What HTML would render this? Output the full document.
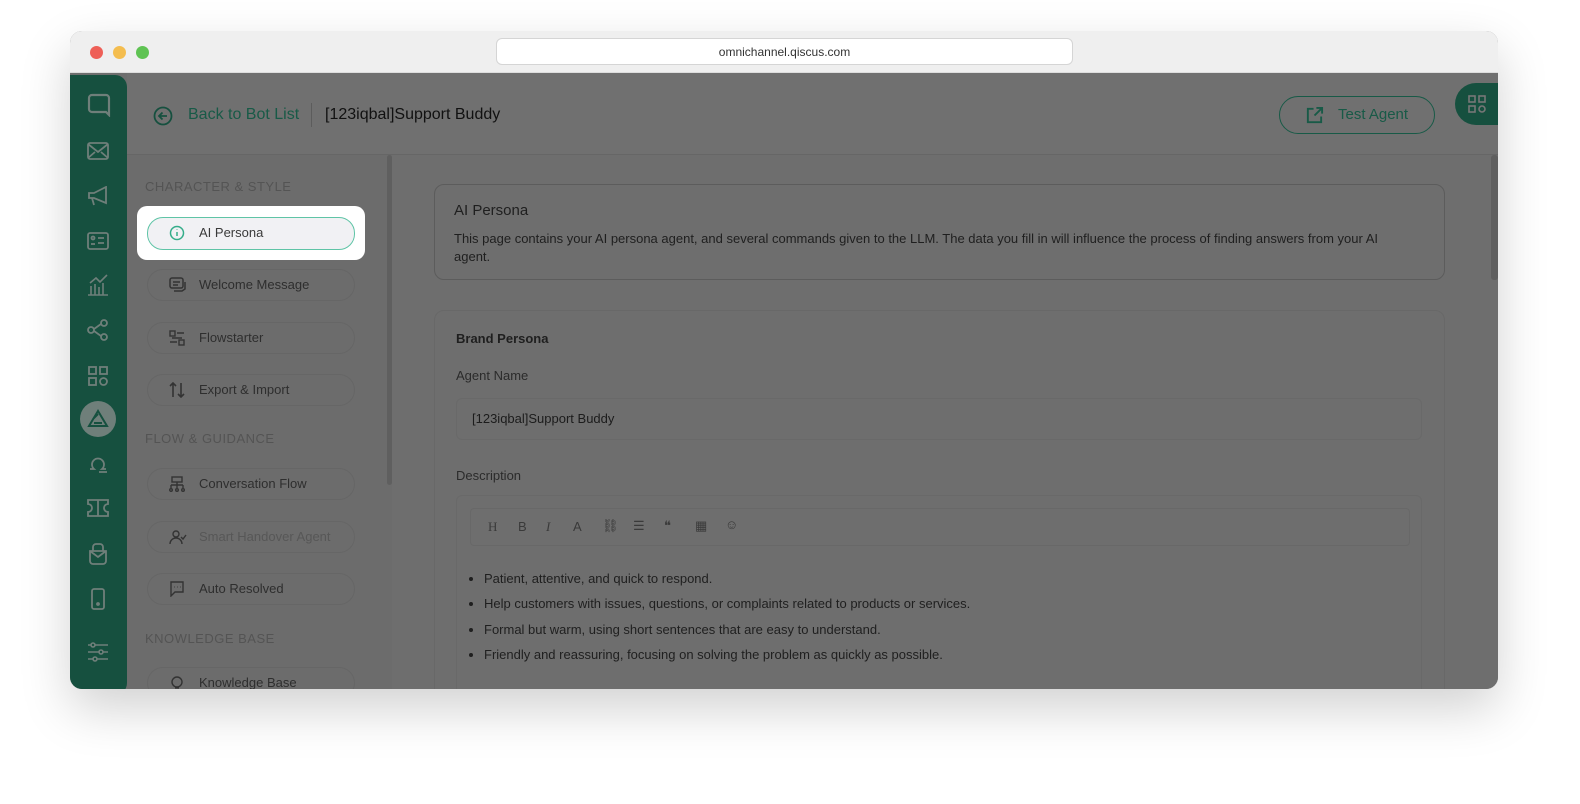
<!DOCTYPE html>
<html><head><meta charset="utf-8"><style>
*{box-sizing:border-box;margin:0;padding:0}
body{width:1580px;height:804px;background:#fff;font-family:"Liberation Sans",sans-serif;position:relative;overflow:hidden}
.win{position:absolute;left:70px;top:31px;width:1428px;height:658px;border-radius:12px;overflow:hidden;box-shadow:0 20px 50px rgba(0,0,0,.18);background:#6e6e6e}
.tb{position:absolute;left:0;top:0;width:100%;height:42px;background:#efefef;border-bottom:1px solid #ddd}
.dot{position:absolute;top:15px;width:13px;height:13px;border-radius:50%}
.url{position:absolute;left:426px;top:7px;width:577px;height:27px;background:#fff;border:1px solid #d5d5d5;border-radius:6px;font-size:12px;color:#333;text-align:center;line-height:26px}
.side{position:absolute;left:0;top:44px;width:57px;height:620px;background:#16503f;border-radius:0 12px 12px 0}
.side svg{position:absolute;left:17px}
.hdr{position:absolute;left:57px;top:42px;right:0;height:82px;background:#707070;border-bottom:1px solid #666}
.nav{position:absolute;left:57px;top:124px;width:265px;bottom:0;background:#6c6c6c}
.sec{position:absolute;left:18px;font-size:13px;color:#545454;letter-spacing:.5px}
.it{position:absolute;left:78px;width:208px;height:32px;border:1px solid #666;border-radius:16px;font-size:13px;color:#2e2e2e;line-height:30px;padding-left:51px}
.it svg{position:absolute;left:21px;top:7px}
.main{position:absolute;left:322px;top:124px;right:0;bottom:0;background:#6e6e6e}
.card{position:absolute;border:1px solid #5c5c5c;border-radius:10px}
.t{position:absolute;color:#1f1f1f}
</style></head><body>
<div class="win">
 <div class="tb">
  <div class="dot" style="left:20px;background:#ee5f57"></div>
  <div class="dot" style="left:43px;background:#f4bd4f"></div>
  <div class="dot" style="left:66px;background:#5fc353"></div>
  <div class="url">omnichannel.qiscus.com</div>
 </div>
 <div class="hdr">
  <svg style="position:absolute;left:26px;top:33px" width="20" height="20" viewBox="0 0 20 20" fill="none" stroke="#16503f" stroke-width="1.8"><circle cx="10" cy="10" r="8.5"/><path d="M14 10H6M9.5 6.5L6 10l3.5 3.5"/></svg>
  <div class="t" style="left:61px;top:33px;font-size:16px;color:#185a47">Back to Bot List</div>
  <div style="position:absolute;left:184px;top:30px;width:1px;height:24px;background:#5c5c5c"></div>
  <div class="t" style="left:198px;top:33px;font-size:16px;color:#111">[123iqbal]Support Buddy</div>
  <div style="position:absolute;left:1152px;top:23px;width:156px;height:38px;border:1px solid #185a47;border-radius:19px;color:#185a47;font-size:15px;line-height:36px;padding-left:58px">Test Agent
   <svg style="position:absolute;left:25px;top:9px" width="19" height="19" viewBox="0 0 20 20" fill="none" stroke="#185a47" stroke-width="2"><path d="M9 3H3v14h14v-6"/><path d="M10 10l8-8M12 2h6v6"/></svg></div>
  <div style="position:absolute;left:1328px;top:10px;width:50px;height:42px;background:#16503f;border-radius:21px 0 0 21px">
   <svg style="position:absolute;left:13px;top:12px" width="18" height="18" viewBox="0 0 18 18" fill="none" stroke="#777" stroke-width="1.6"><rect x="1" y="1" width="6" height="6"/><rect x="11" y="1" width="6" height="6"/><rect x="1" y="11" width="6" height="6"/><circle cx="14" cy="14" r="3"/></svg></div>
 </div>
 <div class="side">
  <svg style="top:18px" width="24" height="24" viewBox="0 0 24 24" fill="none" stroke="#6f7f7a" stroke-width="2.2"><path d="M5 2h14a3 3 0 013 3v17l-3-3H5a3 3 0 01-3-3V5a3 3 0 013-3z"/></svg>
  <svg style="top:67px" width="22" height="18" viewBox="0 0 22 18" fill="none" stroke="#6f7f7a" stroke-width="1.8"><rect x="1" y="1" width="20" height="16" rx="2"/><path d="M1 2l10 8 10-8M1 16l7-6M21 16l-7-6"/></svg>
  <svg style="top:111px" width="22" height="20" viewBox="0 0 22 20" fill="none" stroke="#6f7f7a" stroke-width="1.8"><path d="M2 7h5l12-6v16L7 12H2zM5 12l2 7"/></svg>
  <svg style="top:157px" width="22" height="18" viewBox="0 0 22 18" fill="none" stroke="#6f7f7a" stroke-width="1.8"><rect x="1" y="1" width="20" height="16" rx="2"/><path d="M11 6h6M11 11h6"/><circle cx="6" cy="6" r="1.5"/><path d="M4 12h4"/></svg>
  <svg style="top:199px" width="22" height="22" viewBox="0 0 22 22" fill="none" stroke="#6f7f7a" stroke-width="1.6"><path d="M1 21h20M4 21V12M8 21V10M12 21V13M16 21V9M3 9l6-5 4 4 7-7"/></svg>
  <svg style="top:244px" width="22" height="22" viewBox="0 0 22 22" fill="none" stroke="#6f7f7a" stroke-width="1.8"><circle cx="4" cy="11" r="3"/><circle cx="17" cy="4" r="3"/><circle cx="17" cy="18" r="3"/><path d="M7 10l7-5M7 12l7 5"/></svg>
  <svg style="top:290px" width="22" height="22" viewBox="0 0 22 22" fill="none" stroke="#6f7f7a" stroke-width="1.8"><rect x="2" y="2" width="7" height="7"/><rect x="13" y="2" width="7" height="7"/><rect x="2" y="13" width="7" height="7"/><circle cx="16.5" cy="16.5" r="3.5"/></svg>
  <div style="position:absolute;left:10px;top:326px;width:36px;height:36px;border-radius:50%;background:#6f7f7a"><svg style="position:absolute;left:7px;top:8px" width="22" height="20" viewBox="0 0 22 20" fill="none" stroke="#16503f" stroke-width="2"><path d="M11 2L2 17h18zM7 14h8M6 10l5-5"/></svg></div>
  <svg style="top:378px" width="22" height="22" viewBox="0 0 22 22" fill="none" stroke="#6f7f7a" stroke-width="1.8"><path d="M3 16h4a6 6 0 118 0h4M12 19h8"/></svg>
  <svg style="top:424px" width="22" height="18" viewBox="0 0 22 18" fill="none" stroke="#6f7f7a" stroke-width="1.8"><path d="M1 1h20v4a4 4 0 000 8v4H1v-4a4 4 0 000-8zM11 1v16"/></svg>
  <svg style="top:468px" width="22" height="22" viewBox="0 0 22 22" fill="none" stroke="#6f7f7a" stroke-width="1.8"><path d="M3 8h16v10a3 3 0 01-3 3H6a3 3 0 01-3-3zM3 8l8 6 8-6M6 8V4a3 3 0 013-3h4a3 3 0 013 3v4"/></svg>
  <svg style="top:513px" width="22" height="22" viewBox="0 0 22 22" fill="none" stroke="#6f7f7a" stroke-width="1.8"><rect x="5" y="1" width="12" height="20" rx="2"/><circle cx="11" cy="16" r="1"/></svg>
  <svg style="top:566px" width="22" height="22" viewBox="0 0 22 22" fill="none" stroke="#6f7f7a" stroke-width="1.6"><path d="M1 4h20M1 11h20M1 18h20"/><circle cx="6" cy="4" r="2" fill="#16503f"/><circle cx="14" cy="11" r="2" fill="#16503f"/><circle cx="8" cy="18" r="2" fill="#16503f"/></svg>
 </div>
 <div class="nav">
  <div style="position:absolute;right:0;top:0;width:5px;height:330px;background:#5f5f5f;border-radius:3px"></div>
  <div class="sec" style="top:24px">CHARACTER &amp; STYLE</div>
  <div style="position:absolute;left:10px;top:51px;width:228px;height:54px;background:#fff;border-radius:10px"></div>
  <div class="it" style="top:62px;border:1.5px solid #5fc4a6;background:#f1f1f4;color:#3a3a3a;left:20px;height:33px">AI Persona<svg width="16" height="16" viewBox="0 0 16 16" fill="none" stroke="#35ad8a" stroke-width="1.5"><circle cx="8" cy="8" r="6.5"/><path d="M8 7v4M8 4.5v.5"/></svg></div>
  <div class="it" style="top:114px;left:20px">Welcome Message<svg width="18" height="16" viewBox="0 0 18 16" fill="none" stroke="#333" stroke-width="1.5"><rect x="1" y="1" width="13" height="10" rx="2"/><path d="M4 5h7M4 8h5M16 5v7l-3 2H5"/></svg></div>
  <div class="it" style="top:167px;left:20px">Flowstarter<svg width="16" height="16" viewBox="0 0 16 16" fill="none" stroke="#333" stroke-width="1.4"><rect x="1" y="1" width="5" height="5"/><rect x="10" y="10" width="5" height="5"/><path d="M8 3h7M1 12h7M3 8h10"/></svg></div>
  <div class="it" style="top:219px;left:20px">Export &amp; Import<svg width="16" height="16" viewBox="0 0 16 16" fill="none" stroke="#333" stroke-width="1.6"><path d="M4 15V1M1 4l3-3 3 3M12 1v14M9 12l3 3 3-3"/></svg></div>
  <div class="sec" style="top:276px">FLOW &amp; GUIDANCE</div>
  <div class="it" style="top:313px;left:20px">Conversation Flow<svg width="16" height="16" viewBox="0 0 16 16" fill="none" stroke="#333" stroke-width="1.4"><rect x="3" y="1" width="10" height="5"/><path d="M8 6v3M2 9h12M2 9v3M8 9v3M14 9v3"/><circle cx="2" cy="14" r="1.3"/><circle cx="8" cy="14" r="1.3"/><circle cx="14" cy="14" r="1.3"/></svg></div>
  <div class="it" style="top:366px;left:20px;color:#575757">Smart Handover Agent<svg width="18" height="16" viewBox="0 0 18 16" fill="none" stroke="#333" stroke-width="1.4"><circle cx="7" cy="5" r="3"/><path d="M1 15a6 6 0 0112 0M12 8l2 2 3-4"/></svg></div>
  <div class="it" style="top:418px;left:20px">Auto Resolved<svg width="16" height="16" viewBox="0 0 16 16" fill="none" stroke="#333" stroke-width="1.4"><path d="M2 1h12v10H6l-4 4zM5 6h.5M8 6h.5M11 6h.5"/></svg></div>
  <div class="sec" style="top:476px">KNOWLEDGE BASE</div>
  <div class="it" style="top:512px;left:20px">Knowledge Base<svg width="16" height="16" viewBox="0 0 16 16" fill="none" stroke="#333" stroke-width="1.4"><circle cx="8" cy="7" r="5"/><path d="M6 13h4"/></svg></div>
 </div>
 <div class="main">
  <div style="position:absolute;right:0;top:0;width:7px;height:125px;background:#5f5f5f;border-radius:3px"></div>
  <div class="card" style="left:42px;top:29px;width:1011px;height:96px">
   <div class="t" style="left:19px;top:17px;font-size:15px">AI Persona</div>
   <div class="t" style="left:19px;top:45px;font-size:13px;line-height:18px;width:945px">This page contains your AI persona agent, and several commands given to the LLM. The data you fill in will influence the process of finding answers from your AI agent.</div>
  </div>
  <div class="card" style="left:42px;top:155px;width:1011px;height:520px;border-color:#686868">
   <div class="t" style="left:21px;top:20px;font-size:13px;font-weight:bold">Brand Persona</div>
   <div class="t" style="left:21px;top:57px;font-size:13px;color:#2b2b2b">Agent Name</div>
   <div style="position:absolute;left:21px;top:87px;width:966px;height:42px;border:1px solid #696969;border-radius:6px;font-size:13px;color:#1c1c1c;line-height:40px;padding-left:15px">[123iqbal]Support Buddy</div>
   <div class="t" style="left:21px;top:157px;font-size:13px;color:#2b2b2b">Description</div>
   <div style="position:absolute;left:21px;top:184px;width:966px;height:340px;border:1px solid #696969;border-radius:6px">
    <div style="position:absolute;left:13px;top:12px;width:940px;height:38px;border:1px solid #686868;border-radius:4px;font-size:13px;color:#3a3a3a">
     <span style="position:absolute;left:17px;top:10px;font-family:'Liberation Serif',serif">H</span>
     <span style="position:absolute;left:47px;top:10px">B</span>
     <span style="position:absolute;left:75px;top:10px;font-style:italic;font-family:'Liberation Serif',serif">I</span>
     <span style="position:absolute;left:102px;top:10px">A</span>
     <span style="position:absolute;left:131px;top:9px">⛓</span>
     <span style="position:absolute;left:162px;top:9px">☰</span>
     <span style="position:absolute;left:193px;top:9px">❝</span>
     <span style="position:absolute;left:224px;top:9px">▦</span>
     <span style="position:absolute;left:254px;top:8px">☺</span>
    </div>
    <ul style="position:absolute;left:27px;top:70px;font-size:13px;color:#1f1f1f;line-height:25.3px">
     <li>Patient, attentive, and quick to respond.</li>
     <li>Help customers with issues, questions, or complaints related to products or services.</li>
     <li>Formal but warm, using short sentences that are easy to understand.</li>
     <li>Friendly and reassuring, focusing on solving the problem as quickly as possible.</li>
    </ul>
   </div>
  </div>
 </div>
</div>
</body></html>
